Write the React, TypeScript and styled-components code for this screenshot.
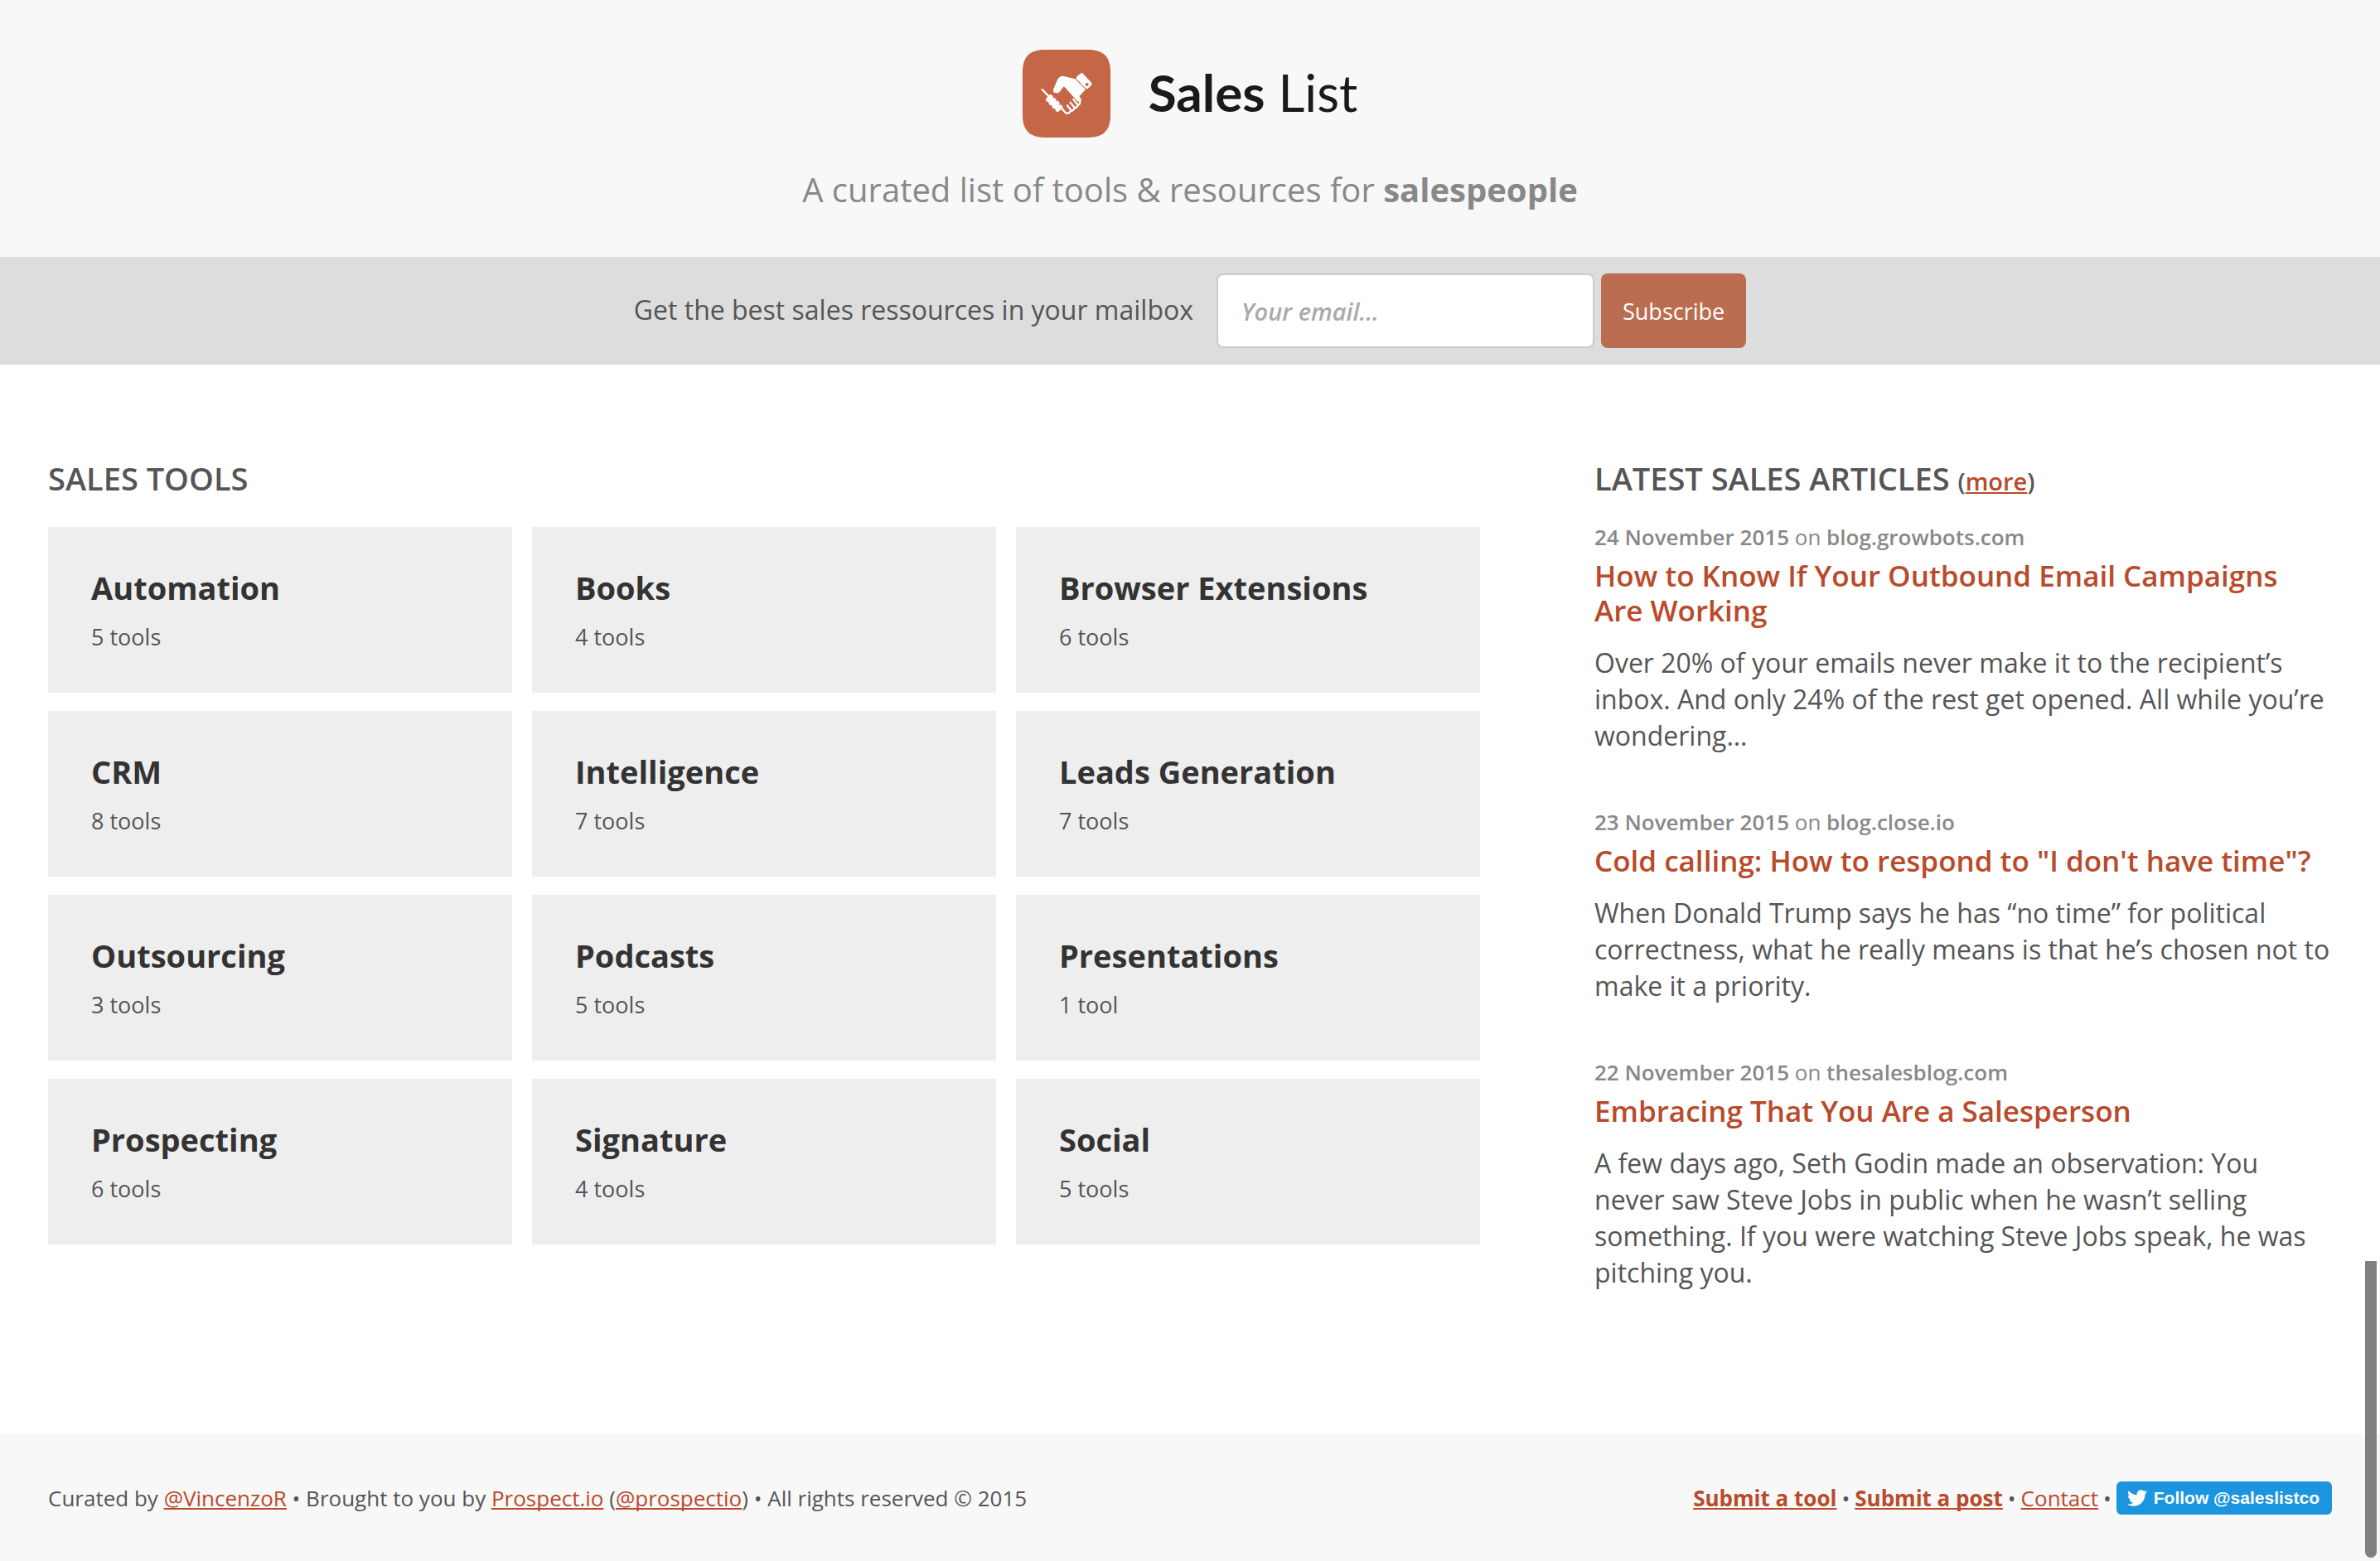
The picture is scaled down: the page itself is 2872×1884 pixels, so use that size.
import React from "react";
import styled, { createGlobalStyle } from "styled-components";
import { FaTwitter } from "react-icons/fa";

const sans = '"Open Sans", "Noto Sans", sans-serif';

const GlobalStyle = createGlobalStyle`
  *, *::before, *::after { box-sizing: border-box; }
  body {
    margin: 0;
    background: #fff;
    color: #555;
    font-family: ${sans};
    font-size: 32px;
    line-height: 44px;
  }
  h1, h2, h3, p, ul { margin: 0; padding: 0; }
  ul { list-style: none; }
`;

const Page = styled.div`
  display: flex;
  flex-direction: column;
  min-height: 100vh;
`;

const Header = styled.header`
  display: flex;
  flex-direction: column;
  align-items: center;
  gap: 35px;
  padding: 60px 58px 53px;
  background: #f8f8f8;
`;

const Brand = styled.h1`
  display: flex;
  align-items: center;
  gap: 46px;
  color: #1a1a1a;
  font-family: Lato, ${sans};
  font-size: 62px;
  font-weight: 400;
  line-height: 102px;
`;

const Wordmark = styled.span`
  padding-bottom: 4px;
`;

const LogoMark = styled.svg`
  display: block;
  width: 106px;
  height: 106px;
`;

const Tagline = styled.p`
  color: #888;
  font-size: 40px;
  line-height: 56px;
`;

const SubscribeBar = styled.form`
  display: flex;
  align-items: center;
  justify-content: center;
  padding: 20px 58px;
  background: #ddd;
`;

const SubscribeLabel = styled.label`
  margin-right: 28px;
  padding-bottom: 2px;
  font-size: 32px;
`;

const EmailInput = styled.input`
  width: 456px;
  height: 90px;
  margin-right: 8px;
  padding: 0 28px;
  border: 2px solid #ccc;
  border-radius: 8px;
  background: #fff;
  color: #555;
  font-family: ${sans};
  font-size: 29px;
  &::placeholder {
    color: #aaa;
    font-style: italic;
    font-weight: 600;
    opacity: 1;
  }
`;

const SubscribeButton = styled.button`
  height: 90px;
  padding: 0 26px;
  border: 0;
  border-radius: 8px;
  background: #bb6d50;
  color: #fff;
  font-family: ${sans};
  font-size: 27px;
`;

const Main = styled.main`
  display: grid;
  flex: 1;
  grid-template-columns: minmax(0, 1728fr) minmax(0, 890fr);
  align-items: start;
  column-gap: 138px;
  padding: 109px 58px 150px;
`;

const SectionTitle = styled.h2`
  font-size: 38px;
  font-weight: 600;
  line-height: 56px;
  text-transform: uppercase;
`;

const More = styled.span`
  font-size: 29px;
  text-transform: none;
`;

const TextLink = styled.a<{ $strong?: boolean }>`
  color: #b94a2a;
  font-weight: ${(p) => (p.$strong ? 700 : "inherit")};
  text-decoration: underline;
  text-decoration-thickness: 2px;
  text-underline-offset: 2px;
  text-decoration-skip-ink: none;
`;

const CardGrid = styled.ul`
  display: grid;
  grid-template-columns: repeat(3, minmax(0, 1fr));
  gap: 22px 24px;
  margin-top: 31px;
`;

const Card = styled.a`
  display: block;
  padding: 45px 52px 47px;
  background: #eee;
  color: #555;
  text-decoration: none;
`;

const CardTitle = styled.h3`
  color: #333;
  font-size: 38px;
  font-weight: 700;
  line-height: 56px;
`;

const CardCount = styled.p`
  margin-top: 12px;
  font-size: 27px;
  line-height: 40px;
`;

const ArticleList = styled.div`
  display: flex;
  flex-direction: column;
  gap: 60px;
  margin-top: 17px;
`;

const Meta = styled.p`
  color: #888;
  font-size: 26px;
  line-height: 44px;
  & > span { font-weight: 600; }
`;

const ArticleTitle = styled.h3`
  margin-top: 4px;
  font-size: 35px;
  font-weight: 600;
  line-height: 42px;
`;

const ArticleLink = styled.a`
  color: #b94a2a;
  text-decoration: none;
`;

const Excerpt = styled.p`
  margin-top: 20px;
`;

const Footer = styled.footer`
  display: flex;
  align-items: center;
  justify-content: space-between;
  padding: 57px 58px 55px;
  background: #f8f8f8;
  font-size: 26px;
  line-height: 42px;
`;

const FooterLinks = styled.nav`
  display: flex;
  align-items: center;
  gap: 6px;
`;

const FollowButton = styled.a`
  display: flex;
  align-items: center;
  gap: 8px;
  height: 40px;
  padding: 0 15px 0 13px;
  border-radius: 6px;
  background: #1b95e0;
  color: #fff;
  font-family: "Liberation Sans", Arial, sans-serif;
  font-size: 21px;
  font-weight: 700;
  text-decoration: none;
`;

const ScrollThumb = styled.div`
  position: fixed;
  right: 4px;
  bottom: 4px;
  width: 14px;
  height: 19vh;
  border-radius: 0 0 7px 7px;
  background: #808080;
`;

const tools = [
  ["Automation", "5 tools"],
  ["Books", "4 tools"],
  ["Browser Extensions", "6 tools"],
  ["CRM", "8 tools"],
  ["Intelligence", "7 tools"],
  ["Leads Generation", "7 tools"],
  ["Outsourcing", "3 tools"],
  ["Podcasts", "5 tools"],
  ["Presentations", "1 tool"],
  ["Prospecting", "6 tools"],
  ["Signature", "4 tools"],
  ["Social", "5 tools"],
];

const articles = [
  {
    date: "24 November 2015",
    site: "blog.growbots.com",
    title: "How to Know If Your Outbound Email Campaigns Are Working",
    text: "Over 20% of your emails never make it to the recipient’s inbox. And only 24% of the rest get opened. All while you’re wondering…",
  },
  {
    date: "23 November 2015",
    site: "blog.close.io",
    title: "Cold calling: How to respond to \"I don't have time\"?",
    text: "When Donald Trump says he has “no time” for political correctness, what he really means is that he’s chosen not to make it a priority.",
  },
  {
    date: "22 November 2015",
    site: "thesalesblog.com",
    title: "Embracing That You Are a Salesperson",
    text: "A few days ago, Seth Godin made an observation: You never saw Steve Jobs in public when he wasn’t selling something. If you were watching Steve Jobs speak, he was pitching you.",
  },
];

function Logo() {
  return (
    <LogoMark viewBox="0 0 318 318" aria-hidden="true">
      <path
        fill="#c56646"
        d="M80 0H238C292 0 318 26 318 80V238C318 292 292 318 238 318H80C26 318 0 292 0 238V80C0 26 26 0 80 0Z"
      />
      <g transform="translate(42 60)" fill="none" stroke="#fff" strokeLinecap="round" strokeLinejoin="round">
        <path strokeWidth="7" d="M29 84 52 108" />
        <path strokeWidth="17" d="M51 121 59 111M61 133 71 123M73 145 83 134M85 156 94 148" />
        <path strokeWidth="12" d="M56 117 90 152" />
        <path
          fill="#fff"
          stroke="none"
          d="M69 84 84 49Q90 35 105 35L148 46Q153 49 156 53L186 84 163 109Q171 116 170 124L158 128 112 77Q107 71 103 77L94 91Q88 99 78 97 66 95 69 84Z"
        />
        <path strokeWidth="7" d="M98 150 111 166Q118 173 127 168L133 161Q142 163 146 150 155 152 158 140 167 139 166 124L158 114" />
        <path strokeWidth="7" d="M120 142 133 159M131 131 146 149M142 120 157 139" />
        <path
          fill="#fff"
          stroke="none"
          d="M153 39 167 26Q172 22 177 27L207 59Q211 64 207 69L194 81Q189 83 185 79L153 46Q151 42 153 39Z"
        />
        <circle cx="191" cy="66" r="6" fill="#c56646" stroke="none" />
      </g>
    </LogoMark>
  );
}

export default function App() {
  return (
    <Page>
      <GlobalStyle />
      <Header>
        <Brand>
          <Logo />
          <Wordmark>
            <b>Sales</b> List
          </Wordmark>
        </Brand>
        <Tagline>
          A curated list of tools &amp; resources for <b>salespeople</b>
        </Tagline>
      </Header>
      <SubscribeBar onSubmit={(e) => e.preventDefault()}>
        <SubscribeLabel htmlFor="email">Get the best sales ressources in your mailbox</SubscribeLabel>
        <EmailInput id="email" type="email" placeholder="Your email..." />
        <SubscribeButton type="submit">Subscribe</SubscribeButton>
      </SubscribeBar>
      <Main>
        <section>
          <SectionTitle>Sales Tools</SectionTitle>
          <CardGrid>
            {tools.map(([name, count]) => (
              <li key={name}>
                <Card href="#">
                  <CardTitle>{name}</CardTitle>
                  <CardCount>{count}</CardCount>
                </Card>
              </li>
            ))}
          </CardGrid>
        </section>
        <section>
          <SectionTitle>
            Latest Sales Articles{" "}
            <More>
              (<TextLink href="#">more</TextLink>)
            </More>
          </SectionTitle>
          <ArticleList>
            {articles.map((a) => (
              <article key={a.title}>
                <Meta>
                  <span>{a.date}</span> on <span>{a.site}</span>
                </Meta>
                <ArticleTitle>
                  <ArticleLink href="#">{a.title}</ArticleLink>
                </ArticleTitle>
                <Excerpt>{a.text}</Excerpt>
              </article>
            ))}
          </ArticleList>
        </section>
      </Main>
      <Footer>
        <p>
          Curated by <TextLink href="#">@VincenzoR</TextLink> • Brought to you by{" "}
          <TextLink href="#">Prospect.io</TextLink> (<TextLink href="#">@prospectio</TextLink>) • All rights
          reserved © 2015
        </p>
        <FooterLinks>
          <TextLink href="#" $strong>
            Submit a tool
          </TextLink>
          <span>•</span>
          <TextLink href="#" $strong>
            Submit a post
          </TextLink>
          <span>•</span>
          <TextLink href="#">Contact</TextLink>
          <span>•</span>
          <FollowButton href="#">
            <FaTwitter size={24} aria-hidden="true" />
            Follow @saleslistco
          </FollowButton>
        </FooterLinks>
      </Footer>
      <ScrollThumb />
    </Page>
  );
}
